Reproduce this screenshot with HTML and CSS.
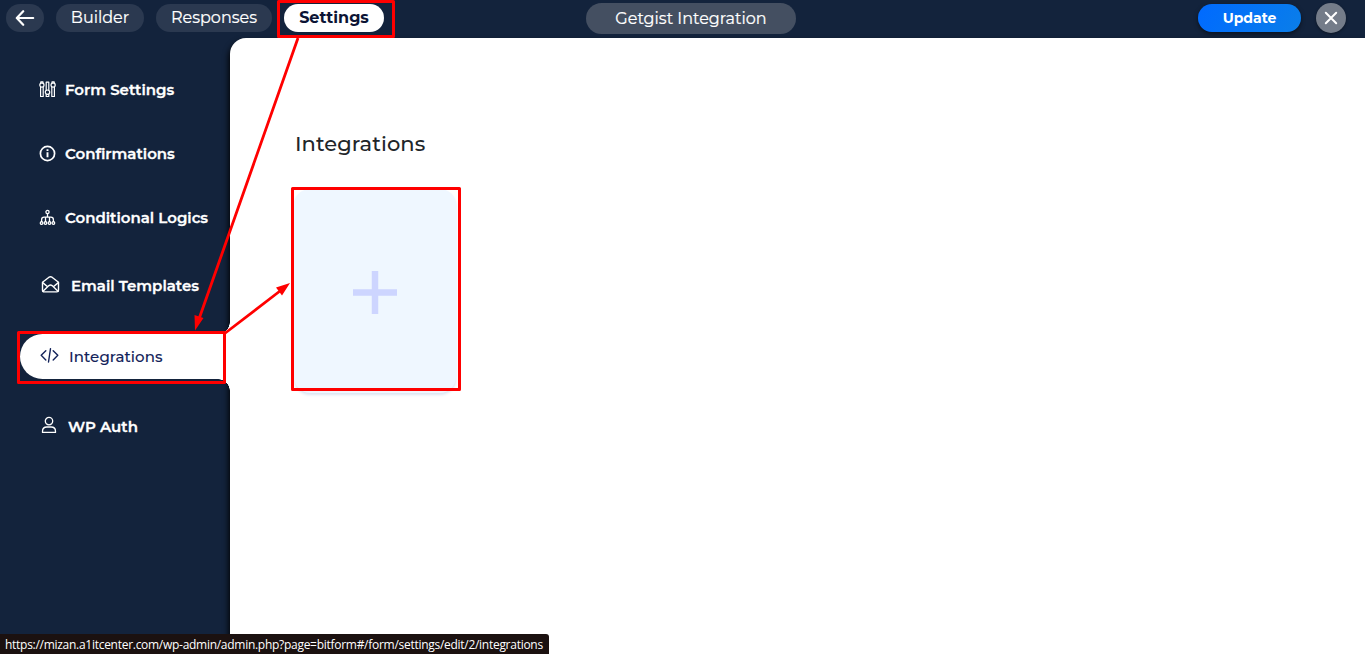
FILE: index.html
```html
<!DOCTYPE html>
<html lang="en">
<head>
<meta charset="utf-8">
<title>Getgist Integration</title>
<link rel="stylesheet" href="styles.css">
</head>
<body>
<header class="topbar">
  <nav class="tabs">
    <a class="pill back" aria-label="Back"><svg width="20" height="16" viewBox="0 0 20 16"><path d="M8.2 1.2 1.8 8l6.4 6.8M2 8h16.2"/></svg></a>
    <a class="pill builder">Builder</a>
    <a class="pill responses">Responses</a>
    <a class="pill settings">Settings</a>
  </nav>
  <div class="form-name"><span>Getgist Integration</span></div>
  <div class="actions">
    <button class="update">Update</button>
    <button class="close" aria-label="Close"><svg width="14" height="14" viewBox="0 0 14 14"><path d="M1.8 1.8l10.4 10.4M12.2 1.8 1.8 12.2"/></svg></button>
  </div>
</header>
<div class="workspace">
  <aside class="sidebar">
    <a class="item form-settings">
      <svg class="icon" width="17" height="17" viewBox="0 0 17 17"><g stroke-width="1.2"><path d="M1.6 6v9.500h2.600V6M12.800 6v9.500h2.600V6M7.200 9V1.200h2.600V9M1.800 2.200V.9H4v1.300M13 2.200V.9h2.200v1.300M7.200 13.200v2.300h2.600v-2.300"/><circle cx="2.900" cy="4" r="2.100"/><circle cx="14.100" cy="4" r="2.100"/><circle cx="8.500" cy="11.200" r="2.200"/></g></svg>
      <span>Form Settings</span></a>
    <a class="item confirmations">
      <svg class="icon" width="17" height="17" viewBox="0 0 17 17"><circle cx="8.5" cy="8.5" r="7.1" stroke-width="1.7"/><path stroke-width="1.9" stroke-linecap="butt" d="M8.500 7.300v5M8.500 4.200v1.900"/></svg>
      <span>Confirmations</span></a>
    <a class="item logics">
      <svg class="icon" width="17" height="17" viewBox="0 0 17 17"><g stroke-width="1.3"><circle cx="8.5" cy="3" r="1.6"/><circle cx="2.6" cy="14" r="1.3"/><circle cx="6.5" cy="14" r="1.3"/><circle cx="10.5" cy="14" r="1.3"/><circle cx="14.4" cy="14" r="1.3"/><path d="M8.5 4.6v3.6M2.6 12.7v-2q0-2.500 2.500-2.500h6.800q2.500 0 2.500 2.500v2M6.500 12.700V8.500M10.500 12.700V8.500"/></g></svg>
      <span>Conditional Logics</span></a>
    <a class="item email">
      <svg class="icon raised" width="19" height="19" viewBox="0 0 19 19"><g stroke-width="1.4"><path d="M1.5 7.2 8 2.2q1.5-1 3 0l6.5 5v8q0 1.7-1.7 1.7H3.2q-1.7 0-1.7-1.7z"/><path d="m1.700 7.600 4.900 4.200M17.300 7.600l-4.900 4.200M2 16.200l5.900-5.600q1.600-1.200 3.200 0l5.900 5.600"/></g></svg>
      <span>Email Templates</span></a>
    <a class="item active">
      <svg class="icon raised" width="19" height="15" viewBox="0 0 19 15"><path stroke-width="1.4" d="M5.800 2.700 1.200 7.300l4.600 4.600M13.200 2.700l4.600 4.600-4.600 4.600M10.500.7 8.500 14"/></svg>
      <span>Integrations</span></a>
    <a class="item auth">
      <svg class="icon raised" width="16" height="18" viewBox="0 0 16 18"><g stroke-width="1.3"><circle cx="8" cy="5.1" r="3.7"/><path d="M1.500 16.400v-1q0-4.400 4.400-4.400h4.200q4.400 0 4.400 4.400v1z"/></g></svg>
      <span>WP Auth</span></a>
  </aside>
  <main class="content">
    <h1 class="title">Integrations</h1>
    <button class="add-card" aria-label="Add integration"><svg width="44" height="43" viewBox="0 0 44 43"><path d="M0 21.500h44M22 0v43"/></svg></button>
  </main>
</div>
<div class="status">https://mizan.a1itcenter.com/wp-admin/admin.php?page=bitform#/form/settings/edit/2/integrations</div>
<svg class="annotations" width="1365" height="654" viewBox="0 0 1365 654">
  <g fill="none" stroke="#f00" stroke-width="3" stroke-linejoin="round">
    <rect x="278.5" y="1.5" width="115" height="35"/>
    <rect x="18.5" y="332.5" width="206" height="50"/>
    <rect x="292.5" y="188.5" width="167" height="201"/>
    <path stroke-width="2.8" d="M298 38 199 319M224 334l56-43"/>
  </g>
  <path fill="#f00" d="M195 330.500 194.500 315l9 3zM290 283l-8 12.500-6-8z"/>
</svg>
</body>
</html>
```
FILE: styles.css
```css
* { box-sizing: border-box; }
body {
  margin: 0;
  height: 654px;
  overflow: hidden;
  display: flex;
  flex-direction: column;
  background: #13233c;
  font-family: Montserrat, Inter, sans-serif;
}
button { border: 0; padding: 0; font-family: inherit; }
svg { display: block; fill: none; flex: none; }

.topbar {
  height: 38px;
  flex: none;
  display: grid;
  grid-template-columns: 586px 210px 1fr;
  align-items: start;
  color: #fff;
}
.tabs { display: flex; gap: 12px; padding: 4px 0 0 6px; }
.pill {
  height: 28px;
  padding-bottom: 1px;
  border-radius: 14px;
  background: #2b3950;
  display: flex;
  align-items: center;
  justify-content: center;
  font-size: 16px;
  font-weight: 400;
  -webkit-text-stroke: .2px currentColor;
  white-space: nowrap;
}
.back { width: 38px; padding: 0; }
.back svg { stroke: #fff; stroke-width: 2.2; stroke-linecap: round; stroke-linejoin: round; }
.builder { width: 88px; }
.responses { width: 116px; }
.settings { width: 100px; background: #fff; color: #0c1435; font-weight: 700; -webkit-text-stroke: 0; }
.form-name {
  margin-top: 3px;
  height: 31px;
  border-radius: 16px;
  background: #444f61;
  display: flex;
  align-items: center;
  justify-content: center;
  font-size: 16px;
  font-weight: 400;
  -webkit-text-stroke: .2px currentColor;
}
.actions { display: flex; justify-content: flex-end; gap: 15px; padding: 3px 19px 0 0; }
.update {
  width: 103px;
  height: 28px;
  margin-top: 1px;
  border-radius: 14px;
  background: linear-gradient(120deg, #006aff, #0a7ee9);
  box-shadow: 0 2px 4px rgba(0, 0, 0, .5);
  color: #fff;
  font-size: 14px;
  font-weight: 700;
}
.close {
  width: 30px;
  height: 30px;
  border-radius: 50%;
  background: #747c89;
  box-shadow: 0 1px 3px rgba(0, 0, 0, .4);
  display: flex;
  align-items: center;
  justify-content: center;
}
.close svg { stroke: #fff; stroke-width: 2; stroke-linecap: round; }

.workspace { flex: 1; display: flex; min-height: 0; }
.sidebar {
  width: 230px;
  flex: none;
  padding-top: 19.5px;
  display: flex;
  flex-direction: column;
  color: #fff;
}
.item {
  height: 64px;
  flex: none;
  display: flex;
  align-items: center;
  gap: 9px;
  padding-left: 39px;
  font-size: 15px;
  font-weight: 600;
  white-space: nowrap;
  -webkit-text-stroke: .3px currentColor;
}
.icon { stroke: currentColor; stroke-linecap: round; stroke-linejoin: round; }
.raised { margin-bottom: 2px; }
.email { height: 72px; padding-left: 41px; gap: 11px; }
.active {
  position: relative;
  z-index: 1;
  height: 45px;
  margin: 12.5px 0 11px 20px;
  padding-left: 20px;
  gap: 10px;
  border-radius: 23px 0 0 23px;
  background: #fff;
  color: #13235a;
  font-weight: 500;
  letter-spacing: .1px;
  -webkit-text-stroke: .1px currentColor;
}
.active::before, .active::after {
  content: "";
  position: absolute;
  right: 0;
  width: 12px;
  height: 12px;
}
.active::before { top: -12px; background: radial-gradient(circle at 0 0, transparent 11.5px, #fff 12px); }
.active::after { bottom: -12px; background: radial-gradient(circle at 0 100%, transparent 11.5px, #fff 12px); }
.auth { height: 72px; padding-left: 41px; gap: 11px; }

.content {
  flex: 1;
  padding: 92px 64px 0;
  border-top-left-radius: 16px;
  background: #fff;
  box-shadow: -1px 4px 6px #000;
}
.title {
  margin: 0 0 0 1px;
  font-size: 21px;
  line-height: 28px;
  font-weight: 500;
  letter-spacing: .07px;
  color: #212529;
}
.add-card {
  width: 162px;
  height: 204px;
  margin-top: 31px;
  padding-top: 3px;
  border-radius: 16px;
  background: #eff7ff;
  box-shadow: 0 2px 3px #dce5f2;
  display: flex;
  align-items: center;
  justify-content: center;
}
.add-card svg { stroke: #cdd5ff; stroke-width: 6.5; }

.status {
  position: absolute;
  left: 0;
  bottom: 0;
  z-index: 2;
  width: 549px;
  height: 20px;
  padding-left: 5px;
  border-radius: 0 3px 0 0;
  background: #1b1110;
  color: #fff;
  font: 12px/22px "Open Sans", sans-serif;
  letter-spacing: -.28px;
  white-space: nowrap;
}
.annotations { position: absolute; inset: 0; z-index: 3; pointer-events: none; }
```
